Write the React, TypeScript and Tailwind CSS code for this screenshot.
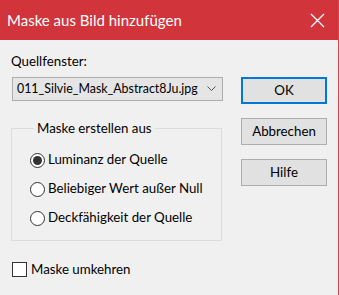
import React from "react";

const font = { fontFamily: 'Lato, "Noto Sans", sans-serif' };

function Radio({ label, checked }: { label: string; checked?: boolean }) {
    return (
        <label className="flex items-center h-[29px] whitespace-nowrap">
            <span className="w-[15px] h-[15px] rounded-full border border-[#333] bg-white flex items-center justify-center shrink-0">
                {checked && <span className="w-[9px] h-[9px] rounded-full bg-[#333]" />}
            </span>
            <span className="ml-[3px] text-[13.3px] text-black leading-none">{label}</span>
        </label>
    );
}

function Button({ label, primary }: { label: string; primary?: boolean }) {
    return (
        <button
            className={
                primary
                    ? "w-[86px] h-[27px] bg-[#e1e1e1] border-2 border-[#0078d7] text-[13.3px] text-black"
                    : "w-[86px] h-[27px] bg-[#e1e1e1] border border-[#adadad] text-[13.3px] text-black"
            }
        >
            {label}
        </button>
    );
}

export default function App() {
    return (
        <div style={font} className="w-[339px] h-[295px] bg-[#f0f0f0] border-r border-[#d8434a] flex flex-col overflow-hidden">
            <div className="h-[40px] bg-[#d1343b] flex items-center justify-between pl-[7px] pr-[13px] shrink-0">
                <span className="text-white text-[15px]">Maske aus Bild hinzufügen</span>
                <svg width="15" height="15" viewBox="0 0 15 15" className="mt-[1px]">
                    <path d="M1 1 L14 14 M14 1 L1 14" stroke="white" strokeWidth="1.3" />
                </svg>
            </div>

            <div className="flex flex-1">
                <div className="w-[230px] pl-[10px] pt-[15px] flex flex-col">
                    <span className="text-[13.3px] text-black leading-none ml-[1px]">Quellfenster:</span>
                    <div className="mt-[9px] ml-[2px] w-[211px] h-[24px] bg-[#e5e5e5] border border-[#adadad] flex items-center justify-between pl-[4px] pr-[6px]">
                        <span className="text-[12.4px] text-black leading-none whitespace-nowrap">011_Silvie_Mask_Abstract8Ju.jpg</span>
                        <svg width="9" height="6" viewBox="0 0 9 6">
                            <path d="M0.5 0.5 L4.5 4.5 L8.5 0.5" stroke="#555" fill="none" strokeWidth="1" />
                        </svg>
                    </div>

                    <fieldset className="mt-[21px] ml-[1px] w-[211px] h-[119px] border border-[#dcdcdc] pl-[18px] pt-[10px]">
                        <legend className="ml-[4px] px-[3px] text-[13.3px] text-black leading-none">Maske erstellen aus</legend>
                        <Radio label="Luminanz der Quelle" checked />
                        <Radio label="Beliebiger Wert außer Null" />
                        <Radio label="Deckfähigkeit der Quelle" />
                    </fieldset>

                    <label className="mt-[21px] ml-[2px] flex items-center">
                        <span className="w-[15px] h-[15px] border border-[#333] bg-white" />
                        <span className="ml-[4px] text-[13.3px] text-black leading-none">Maske umkehren</span>
                    </label>
                </div>

                <div className="pt-[37px] pl-[11px] flex flex-col gap-[14px]">
                    <Button label="OK" primary />
                    <Button label="Abbrechen" />
                    <Button label="Hilfe" />
                </div>
            </div>
        </div>
    );
}
